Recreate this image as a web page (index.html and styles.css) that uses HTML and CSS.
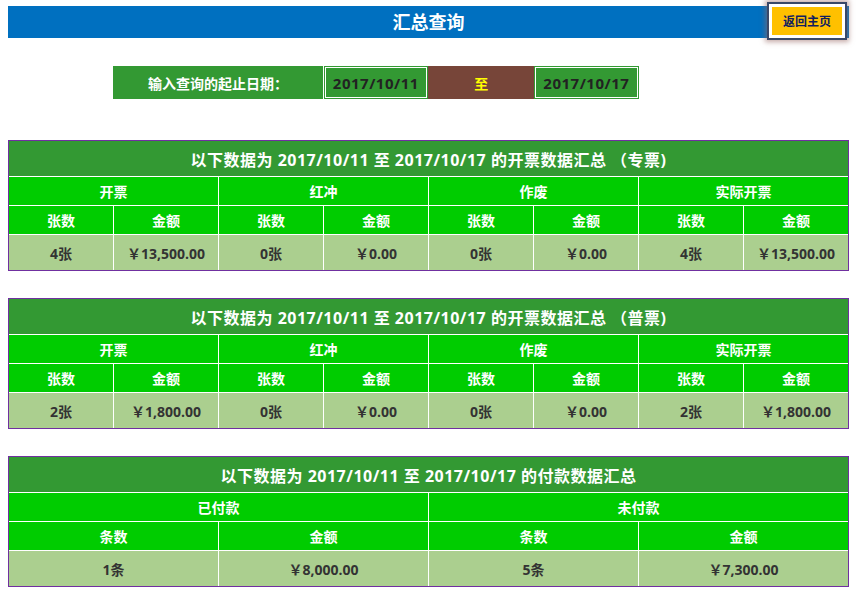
FILE: index.html
```html
<!DOCTYPE html>
<html lang="zh-CN">
<head>
<meta charset="utf-8">
<title>汇总查询</title>
<link rel="stylesheet" href="styles.css">
</head>
<body>
<div class="page">
  <header class="topbar">
    <h1 class="topbar-title">汇总查询</h1>
    <a class="home-btn" href="#">返回主页</a>
  </header>

  <div class="date-row">
    <div class="date-label">输入查询的起止日期：</div>
    <div class="date-box">2017/10/11</div>
    <div class="date-to">至</div>
    <div class="date-box">2017/10/17</div>
  </div>

  <section class="sum-table cols8">
    <div class="cell title span8">以下数据为 2017/10/11 至 2017/10/17 的开票数据汇总 （专票)</div>
    <div class="cell head span2">开票</div>
    <div class="cell head span2">红冲</div>
    <div class="cell head span2">作废</div>
    <div class="cell head span2">实际开票</div>
    <div class="cell head">张数</div><div class="cell head">金额</div>
    <div class="cell head">张数</div><div class="cell head">金额</div>
    <div class="cell head">张数</div><div class="cell head">金额</div>
    <div class="cell head">张数</div><div class="cell head">金额</div>
    <div class="cell data">4张</div><div class="cell data">￥13,500.00</div>
    <div class="cell data">0张</div><div class="cell data">￥0.00</div>
    <div class="cell data">0张</div><div class="cell data">￥0.00</div>
    <div class="cell data">4张</div><div class="cell data">￥13,500.00</div>
  </section>

  <section class="sum-table cols8">
    <div class="cell title span8">以下数据为 2017/10/11 至 2017/10/17 的开票数据汇总 （普票)</div>
    <div class="cell head span2">开票</div>
    <div class="cell head span2">红冲</div>
    <div class="cell head span2">作废</div>
    <div class="cell head span2">实际开票</div>
    <div class="cell head">张数</div><div class="cell head">金额</div>
    <div class="cell head">张数</div><div class="cell head">金额</div>
    <div class="cell head">张数</div><div class="cell head">金额</div>
    <div class="cell head">张数</div><div class="cell head">金额</div>
    <div class="cell data">2张</div><div class="cell data">￥1,800.00</div>
    <div class="cell data">0张</div><div class="cell data">￥0.00</div>
    <div class="cell data">0张</div><div class="cell data">￥0.00</div>
    <div class="cell data">2张</div><div class="cell data">￥1,800.00</div>
  </section>

  <section class="sum-table cols4">
    <div class="cell title span4">以下数据为 2017/10/11 至 2017/10/17 的付款数据汇总</div>
    <div class="cell head span2">已付款</div>
    <div class="cell head span2">未付款</div>
    <div class="cell head">条数</div><div class="cell head">金额</div>
    <div class="cell head">条数</div><div class="cell head">金额</div>
    <div class="cell data">1条</div><div class="cell data">￥8,000.00</div>
    <div class="cell data">5条</div><div class="cell data">￥7,300.00</div>
  </section>
</div>
</body>
</html>
```

FILE: styles.css
```css
html, body {
  margin: 0;
  padding: 0;
  background: #fff;
}

body {
  font-family: "Open Sans", "Noto Sans CJK SC", sans-serif;
  font-weight: bold;
}

.page {
  width: 841px;
  padding: 6px 8px;
}

.topbar {
  position: relative;
  height: 32px;
  background: #0070c0;
  display: flex;
  align-items: center;
  justify-content: center;
}

.topbar-title {
  margin: 0;
  font-size: 18px;
  line-height: 32px;
  color: #fff;
  font-weight: bold;
}

.home-btn {
  position: absolute;
  left: 761px;
  top: -2px;
  width: 70px;
  height: 28px;
  box-sizing: content-box;
  background: #ffc000;
  border: 3px solid #fff;
  outline: 2px solid #3a4868;
  box-shadow: 0 0 5px 4px rgba(150, 100, 95, 0.55);
  color: #102060;
  font-family: "Noto Sans CJK SC", sans-serif;
  font-size: 12px;
  font-weight: bold;
  line-height: 28px;
  text-align: center;
  text-decoration: none;
}

.date-row {
  margin-top: 28px;
  display: grid;
  grid-template-columns: repeat(8, 1fr);
  column-gap: 1px;
  height: 33px;
}

.date-label {
  grid-column: 2 / span 2;
  background: #339933;
  color: #fff;
  font-size: 14px;
  display: flex;
  align-items: center;
  justify-content: center;
}

.date-box {
  background: #339933;
  border: 1px solid #339933;
  box-shadow: inset 0 0 0 1px #fff;
  color: #222;
  font-size: 15px;
  letter-spacing: 0.5px;
  display: flex;
  align-items: center;
  justify-content: center;
}

.date-to {
  background: #774539;
  color: #ffff00;
  font-size: 14px;
  display: flex;
  align-items: center;
  justify-content: center;
  margin: 0 -1px;
}

.sum-table {
  display: grid;
  gap: 1px;
  background: #fff;
  border: 1px solid #7030a0;
  grid-template-rows: 35px 28px 28px 35px;
}

.date-row + .sum-table {
  margin-top: 41px;
}

.sum-table + .sum-table {
  margin-top: 27px;
}

.cols8 {
  grid-template-columns: repeat(8, 1fr);
}

.cols4 {
  grid-template-columns: repeat(4, 1fr);
}

.span8 { grid-column: span 8; }
.span4 { grid-column: span 4; }
.span2 { grid-column: span 2; }

.cell {
  display: flex;
  align-items: center;
  justify-content: center;
  white-space: nowrap;
}

.title {
  background: #339933;
  color: #fff;
  font-size: 16px;
  letter-spacing: 0.5px;
}

.head {
  background: #00cc00;
  color: #fff;
  font-size: 14px;
}

.data {
  background: #abcf8f;
  color: #333;
  font-size: 14px;
}
```
